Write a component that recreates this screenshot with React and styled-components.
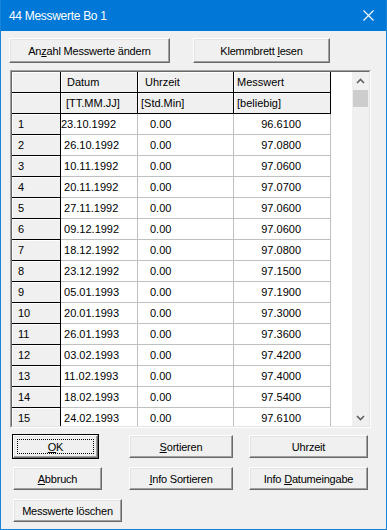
import React from 'react';
import styled, { createGlobalStyle } from 'styled-components';

const Global = createGlobalStyle`
  html, body {
    margin: 0;
    padding: 0;
    background: #ffffff;
  }
  body {
    font-family: "Liberation Sans", Arial, sans-serif;
  }
`;

const Window = styled.div`
  width: 387px;
  height: 530px;
  box-sizing: border-box;
  border: 1px solid #1883d7;
  border-top: none;
  display: flex;
  flex-direction: column;
  background: #f0f0f0;
  overflow: hidden;
`;

const TitleBar = styled.div`
  height: 31px;
  margin: 0 -1px;
  flex-shrink: 0;
  background: #0078d7;
  color: #ffffff;
  display: flex;
  align-items: center;
  justify-content: space-between;
  padding: 0 13px 0 9px;
  font-size: 12px;
  letter-spacing: -0.3px;
`;

const CloseIcon = styled.svg`
  width: 11px;
  height: 11px;
  display: block;
`;

const Body = styled.div`
  flex: 1;
  display: flex;
  flex-direction: column;
  font-size: 11px;
`;

const TopRow = styled.div`
  display: flex;
  gap: 23px;
  margin: 7px 0 0 8px;
`;

const Button = styled.div`
  position: relative;
  box-sizing: border-box;
  width: ${(p) => p.$w}px;
  height: ${(p) => p.$h || 23}px;
  background: #f0f0f0;
  border: 1px solid;
  border-color: #ffffff #696969 #696969 #ffffff;
  box-shadow: inset -1px -1px 0 #a0a0a0, inset 1px 1px 0 #e3e3e3;
  display: flex;
  align-items: center;
  justify-content: center;
  font-size: 11px;
  letter-spacing: -0.2px;
  color: #000;
  white-space: nowrap;
  ${(p) =>
    p.$default &&
    `
    outline: 1px solid #000;
    outline-offset: 0;
    &::after {
      content: '';
      position: absolute;
      inset: 3px;
      border: 1px dotted #000;
    }
  `}
`;

const Key = styled.u`
  text-decoration: underline;
  text-underline-offset: 1px;
`;

const GridFrame = styled.div`
  margin: 7px 0 0 9px;
  width: 361px;
  height: 358px;
  box-sizing: border-box;
  border: 1px solid;
  border-color: #a0a0a0 #ffffff #ffffff #a0a0a0;
  display: flex;
  background: #ffffff;
`;

const GridInner = styled.div`
  flex: 1;
  display: flex;
  border: 1px solid;
  border-color: #696969 #e3e3e3 #e3e3e3 #696969;
  overflow: hidden;
`;

const Table = styled.div`
  flex: 1;
  display: grid;
  grid-template-columns: 49px 77px 96px 97px 1fr;
  grid-auto-rows: 21px;
  align-content: start;
  overflow: hidden;
`;

const Cell = styled.div`
  box-sizing: border-box;
  display: flex;
  align-items: center;
  justify-content: ${(p) => (p.$right ? 'flex-end' : 'flex-start')};
  padding-left: ${(p) => p.$pl || 0}px;
  padding-right: ${(p) => p.$pr || 0}px;
  font-size: 11px;
  color: #000;
  white-space: pre;
  background: ${(p) => (p.$fixed ? '#f0f0f0' : '#ffffff')};
  border-right: 1px solid ${(p) => (p.$fixed ? '#000' : '#c0c0c0')};
  border-bottom: 1px solid ${(p) => (p.$fixed ? '#000' : '#c0c0c0')};
  box-shadow: ${(p) => (p.$fixed ? 'inset 1px 1px 0 #ffffff' : 'none')};
`;

const Filler = styled.div`
  background: #ffffff;
`;

const Scrollbar = styled.div`
  width: 17px;
  flex-shrink: 0;
  background: #f0f0f0;
  display: flex;
  flex-direction: column;
`;

const ArrowBox = styled.div`
  height: 17px;
  display: flex;
  align-items: center;
  justify-content: center;
`;

const Track = styled.div`
  flex: 1;
  padding: 1px 1px 0 1px;
`;

const Thumb = styled.div`
  height: 17px;
  background: #cdcdcd;
`;

const BottomGrid = styled.div`
  display: grid;
  grid-template-columns: 116px 120px 119px;
  grid-auto-rows: 23px;
  row-gap: 9px;
  margin: 7px 0 0 12px;
`;

const rows = [
  ['23.10.1992', '96.6100'],
  [' 26.10.1992', '97.0800'],
  [' 10.11.1992', '97.0600'],
  [' 20.11.1992', '97.0700'],
  [' 27.11.1992', '97.0600'],
  [' 09.12.1992', '97.0600'],
  [' 18.12.1992', '97.0800'],
  [' 23.12.1992', '97.1500'],
  [' 05.01.1993', '97.1900'],
  [' 20.01.1993', '97.3000'],
  [' 26.01.1993', '97.3600'],
  [' 03.02.1993', '97.4200'],
  [' 11.02.1993', '97.4000'],
  [' 18.02.1993', '97.5400'],
  [' 24.02.1993', '97.6100'],
];

function Chevron({ down }) {
  return (
    <svg width="9" height="6" viewBox="0 0 9 6">
      <path
        d={down ? 'M1 1 L4.5 4.5 L8 1' : 'M1 5 L4.5 1.5 L8 5'}
        fill="none"
        stroke="#606060"
        strokeWidth="1.6"
      />
    </svg>
  );
}

export default function App() {
  return (
    <>
      <Global />
      <Window>
        <TitleBar>
          <span>44 Messwerte Bo 1</span>
          <CloseIcon viewBox="0 0 11 11">
            <path d="M0.5 0.5 L10.5 10.5 M10.5 0.5 L0.5 10.5" stroke="#fff" strokeWidth="1.1" />
          </CloseIcon>
        </TitleBar>
        <Body>
          <TopRow>
            <Button $w={161} $h={25}>
              <span>An<Key>z</Key>ahl Messwerte ändern</span>
            </Button>
            <Button $w={137} $h={25}>
              <span>Klemmbrett <Key>l</Key>esen</span>
            </Button>
          </TopRow>

          <GridFrame>
            <GridInner>
              <Table>
                <Cell $fixed />
                <Cell $fixed $pl={6}>Datum</Cell>
                <Cell $fixed $pl={7}>Uhrzeit</Cell>
                <Cell $fixed $pl={3}>Messwert</Cell>
                <Filler />
                <Cell $fixed />
                <Cell $fixed $pl={5}>[TT.MM.JJ]</Cell>
                <Cell $fixed $pl={3}>[Std.Min]</Cell>
                <Cell $fixed $pl={3}>[beliebig]</Cell>
                <Filler />
                {rows.map(([date, value], i) => (
                  <React.Fragment key={i}>
                    <Cell $fixed $pl={6}>{i + 1}</Cell>
                    <Cell $pl={0}>{date}</Cell>
                    <Cell $pl={12}>0.00</Cell>
                    <Cell $right $pr={29}>{value}</Cell>
                    <Filler />
                  </React.Fragment>
                ))}
              </Table>
              <Scrollbar>
                <ArrowBox>
                  <Chevron />
                </ArrowBox>
                <Track>
                  <Thumb />
                </Track>
                <ArrowBox>
                  <Chevron down />
                </ArrowBox>
              </Scrollbar>
            </GridInner>
          </GridFrame>

          <BottomGrid>
            <Button $w={85} $default>
              <span><Key>O</Key>K</span>
            </Button>
            <Button $w={104}>
              <span><Key>S</Key>ortieren</span>
            </Button>
            <Button $w={119}>Uhrzeit</Button>
            <Button $w={89}>
              <span><Key>A</Key>bbruch</span>
            </Button>
            <Button $w={104}>
              <span><Key>I</Key>nfo Sortieren</span>
            </Button>
            <Button $w={119}>
              <span>Info <Key>D</Key>atumeingabe</span>
            </Button>
            <Button $w={109}>Messwerte löschen</Button>
          </BottomGrid>
        </Body>
      </Window>
    </>
  );
}
